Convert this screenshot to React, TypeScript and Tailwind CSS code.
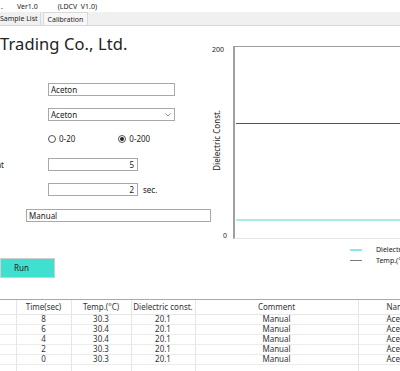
export default function App() {
  const rows = [
    { t: "8", temp: "30.3", d: "20.1" },
    { t: "6", temp: "30.4", d: "20.1" },
    { t: "4", temp: "30.4", d: "20.1" },
    { t: "2", temp: "30.3", d: "20.1" },
    { t: "0", temp: "30.3", d: "20.1" },
  ];

  return (
    <div className="w-[400px] h-[371px] overflow-hidden bg-white text-[#222] font-['Noto_Sans',sans-serif] flex flex-col">
      {/* title bar */}
      <div className="h-[12px] flex items-center text-[7px] leading-none shrink-0 whitespace-nowrap">
        <span className="ml-[1px]">.</span>
        <span className="ml-[14px]">Ver1.0</span>
        <span className="ml-[20px]">(LDCV&nbsp;&nbsp;V1.0)</span>
      </div>

      {/* tabs */}
      <div className="h-[14px] shrink-0 bg-[#f0f0f0] border-b border-[#d9d9d9] flex items-stretch text-[7px] leading-none whitespace-nowrap">
        <div className="flex items-center pr-[2px] border-r border-[#d9d9d9]">Sample List</div>
        <div className="ml-[2px] flex items-center px-[4px] bg-[#f7f7f7] border-x border-t border-[#d9d9d9]">Calibration</div>
      </div>

      {/* main */}
      <div className="h-[273px] shrink-0 flex">
        <div className="w-[212px] shrink-0 flex flex-col text-[8px]">
          <div className="mt-[6px] h-[24px] text-[16.5px] leading-[24px] whitespace-nowrap tracking-[0.1px]">Trading Co., Ltd.</div>

          <div className="mt-[27px] ml-[48px] w-[127px] h-[13px] border border-[#a8a8a8] flex items-center px-[2px] leading-none">
            Aceton
          </div>

          <div className="mt-[12px] ml-[48px] w-[127px] h-[13px] border border-[#a8a8a8] flex items-center justify-between px-[2px] leading-none">
            <span>Aceton</span>
            <svg width="6" height="4" viewBox="0 0 6 4" className="mr-[1px]">
              <path d="M0.5 0.5 L3 3 L5.5 0.5" fill="none" stroke="#777" strokeWidth="0.8" />
            </svg>
          </div>

          <div className="mt-[12px] h-[12px] flex items-center leading-none">
            <div className="ml-[48px] w-[8px] h-[8px] rounded-full border border-[#555] bg-white" />
            <span className="ml-[3px]">0-20</span>
            <div className="ml-[43px] w-[8px] h-[8px] rounded-full border border-[#555] bg-white flex items-center justify-center">
              <div className="w-[4px] h-[4px] rounded-full bg-[#222]" />
            </div>
            <span className="ml-[3px]">0-200</span>
          </div>

          <div className="mt-[13px] h-[13px] flex items-center leading-none">
            <span className="w-[44px] -ml-[40px] text-right overflow-hidden whitespace-nowrap">Count</span>
            <div className="ml-[44px] w-[90px] h-[13px] border border-[#a8a8a8] flex items-center justify-end px-[3px]">5</div>
          </div>

          <div className="mt-[12px] h-[13px] flex items-center leading-none">
            <div className="ml-[48px] w-[90px] h-[13px] border border-[#a8a8a8] flex items-center justify-end px-[3px]">2</div>
            <span className="ml-[5px]">sec.</span>
          </div>

          <div className="mt-[13px] ml-[26px] w-[185px] h-[13px] border border-[#a8a8a8] flex items-center px-[2px] leading-none">
            Manual
          </div>

          <button className="mt-[36px] w-[55px] h-[20px] bg-[#40e0d0] border border-[#cfcfcf] text-[8px] leading-none flex items-center justify-center pr-[12px]">
            Run
          </button>
        </div>

        {/* chart */}
        <div className="flex-1 flex flex-col pt-[20px] min-w-0">
          <div className="flex h-[193px]">
            <div className="w-[21px] shrink-0 grid text-[7px] leading-none">
              <div className="col-start-1 row-start-1 flex flex-col justify-between">
                <span className="block text-left">200</span>
                <span className="block text-right pr-[6px]">0</span>
              </div>
              <div className="col-start-1 row-start-1 flex items-center pl-[1px] pb-[4px]">
                <span className="[writing-mode:vertical-rl] rotate-180 text-[8px] whitespace-nowrap">Dielectric Const.</span>
              </div>
            </div>
            <div className="flex-1 border-l-2 border-l-[#a0a0a0] border-t border-t-[#a0a0a0] border-b border-b-[#e4e4e4]">
              <svg width="100%" height="100%" preserveAspectRatio="none" viewBox="0 0 167 191">
                <line x1="1" y1="76.5" x2="167" y2="76.5" stroke="#555" strokeWidth="1" />
                <line x1="1" y1="173" x2="167" y2="173" stroke="#8de6e6" strokeWidth="1.5" />
              </svg>
            </div>
          </div>
          <div className="mt-[5px] ml-[138px] w-max flex flex-col text-[7px] leading-none whitespace-nowrap">
            <div className="h-[11px] flex items-center">
              <div className="w-[12px] h-[2px] bg-[#8de6e6] shrink-0" />
              <span className="ml-[14px] whitespace-nowrap">Dielectric Const.</span>
            </div>
            <div className="h-[11px] flex items-center">
              <div className="w-[12px] h-[1.5px] bg-[#777] shrink-0" />
              <span className="ml-[14px] whitespace-nowrap">Temp.(°C)</span>
            </div>
          </div>
        </div>
      </div>

      {/* table */}
      <div className="flex-1 border-t border-[#a9a9a9] overflow-hidden">
        <table className="table-fixed border-collapse text-[8px] text-[#333] leading-none w-[460px] h-full">
          <colgroup>
            <col className="w-[16px]" />
            <col className="w-[55px]" />
            <col className="w-[60px]" />
            <col className="w-[64px]" />
            <col className="w-[163px]" />
            <col className="w-[102px]" />
          </colgroup>
          <thead>
            <tr className="h-[14px] border-b border-[#e6e6e6]">
              <th className="font-normal border-r border-[#e6e6e6]"></th>
              <th className="font-normal border-r border-[#e6e6e6]">Time(sec)</th>
              <th className="font-normal border-r border-[#e6e6e6]">Temp.(°C)</th>
              <th className="font-normal border-r border-[#e6e6e6]">Dielectric const.</th>
              <th className="font-normal border-r border-[#e6e6e6]">Comment</th>
              <th className="font-normal text-left pl-[28px]">Name</th>
            </tr>
          </thead>
          <tbody>
            {rows.map((r, i) => (
              <tr key={i} className="h-[10px] border-b border-[#ececec]">
                <td className="border-r border-[#e6e6e6]"></td>
                <td className="text-center border-r border-[#e6e6e6]">{r.t}</td>
                <td className="text-center border-r border-[#e6e6e6]">{r.temp}</td>
                <td className="text-center border-r border-[#e6e6e6]">{r.d}</td>
                <td className="text-center border-r border-[#e6e6e6]">Manual</td>
                <td className="text-left pl-[28px]">Aceton</td>
              </tr>
            ))}
            <tr>
              <td className="border-r border-[#e6e6e6]"></td>
              <td className="border-r border-[#e6e6e6]"></td>
              <td className="border-r border-[#e6e6e6]"></td>
              <td className="border-r border-[#e6e6e6]"></td>
              <td className="border-r border-[#e6e6e6]"></td>
              <td></td>
            </tr>
          </tbody>
        </table>
      </div>
    </div>
  );
}
